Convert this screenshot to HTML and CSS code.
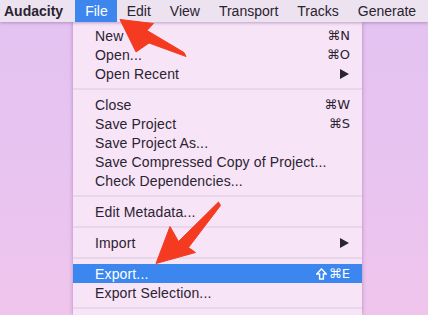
FILE: index.html
```html
<!DOCTYPE html>
<html>
<head>
<meta charset="utf-8">
<link rel="stylesheet" href="styles.css">
</head>
<body>
<div class="screen">
  <div class="menubar">
    <span class="mb-item app">Audacity</span>
    <span class="mb-item active">File</span>
    <span class="mb-item">Edit</span>
    <span class="mb-item">View</span>
    <span class="mb-item">Transport</span>
    <span class="mb-item">Tracks</span>
    <span class="mb-item">Generate</span>
  </div>
  <div class="desk">
    <div class="menu">
      <div class="row"><span>New</span><span class="key">⌘N</span></div>
      <div class="row"><span>Open...</span><span class="key">⌘O</span></div>
      <div class="row"><span>Open Recent</span><span class="sub"></span></div>
      <div class="sep"></div>
      <div class="row"><span>Close</span><span class="key">⌘W</span></div>
      <div class="row"><span>Save Project</span><span class="key">⌘S</span></div>
      <div class="row"><span>Save Project As...</span></div>
      <div class="row"><span>Save Compressed Copy of Project...</span></div>
      <div class="row"><span>Check Dependencies...</span></div>
      <div class="sep"></div>
      <div class="row"><span>Edit Metadata...</span></div>
      <div class="sep"></div>
      <div class="row"><span>Import</span><span class="sub"></span></div>
      <div class="sep"></div>
      <div class="row hl"><span>Export...</span><span class="key"><svg class="shift" width="11" height="12" viewBox="0 0 11 12"><polygon points="5.5,0.9 10.2,6 7.4,6 7.4,11 3.6,11 3.6,6 0.8,6"/></svg>⌘E</span></div>
      <div class="row"><span>Export Selection...</span></div>
      <div class="sep"></div>
    </div>
  </div>
  <svg class="arrows" width="428" height="315" viewBox="0 0 428 315">
    <polygon class="arrow" points="120,19.5 153.5,23.5 147,30.5 184,52.5 186,56.5 149,43 136,52"/>
    <polygon class="arrow" points="156,263.5 170,226.5 178.5,241.5 218.5,202 220.5,205.5 188.5,247.5 195.5,252.5"/>
  </svg>
</div>
</body>
</html>
```
FILE: styles.css
```css
html, body {
  margin: 0;
  padding: 0;
}
body {
  width: 428px;
  height: 315px;
  overflow: hidden;
  font-family: "Liberation Sans", "DejaVu Sans", sans-serif;
}
.screen {
  position: relative;
  width: 428px;
  height: 315px;
  display: flex;
  flex-direction: column;
  background: linear-gradient(180deg, #e3c2f1 0%, #e8c4f0 55%, #efc5ec 100%);
  overflow: hidden;
}
.menubar {
  height: 22px;
  flex: none;
  display: flex;
  align-items: stretch;
  background: #ede2ef;
  padding-left: 4px;
  font-size: 14px;
  color: #2a2230;
  box-shadow: 0 1px 3px rgba(120, 70, 140, 0.45);
  position: relative;
  z-index: 1;
}
.mb-item {
  display: flex;
  align-items: center;
  padding: 0 9px 0 10px;
  white-space: nowrap;
}
.mb-item.app {
  font-weight: bold;
  padding: 0 12px 0 0;
}
.mb-item.active {
  background: #3d86ee;
  color: #ffffff;
  padding: 0 9px 0 10px;
}
.desk {
  flex: 1;
  display: flex;
  padding-left: 73px;
}
.menu {
  width: 289px;
  background: #f7e4f7;
  padding-top: 4px;
  box-shadow: 0 0 4px rgba(110, 60, 130, 0.45);
  font-size: 14px;
  color: #2b2331;
  letter-spacing: 0.15px;
}
.row {
  height: 19px;
  display: flex;
  align-items: center;
  justify-content: space-between;
  padding: 0 12px 0 22px;
  white-space: nowrap;
}
.row.hl {
  background: #3b87ef;
  color: #ffffff;
}
.key {
  display: flex;
  align-items: center;
  gap: 2px;
  font-family: "DejaVu Sans", sans-serif;
  font-size: 13px;
  letter-spacing: 0;
}
.shift {
  display: block;
}
.shift polygon {
  fill: none;
  stroke: #ffffff;
  stroke-width: 1.4;
  stroke-linejoin: miter;
}
.sub {
  width: 0;
  height: 0;
  border-left: 9px solid #2b2331;
  border-top: 5px solid transparent;
  border-bottom: 5px solid transparent;
  margin-right: 1px;
}
.sep {
  height: 2px;
  margin: 5px 0;
  background: #e8d6e9;
}
.arrows {
  position: absolute;
  left: 0;
  top: 0;
  pointer-events: none;
  z-index: 2;
}
.arrow {
  fill: #f43b21;
  stroke: #f43b21;
  stroke-width: 1;
  stroke-linejoin: round;
}
```
